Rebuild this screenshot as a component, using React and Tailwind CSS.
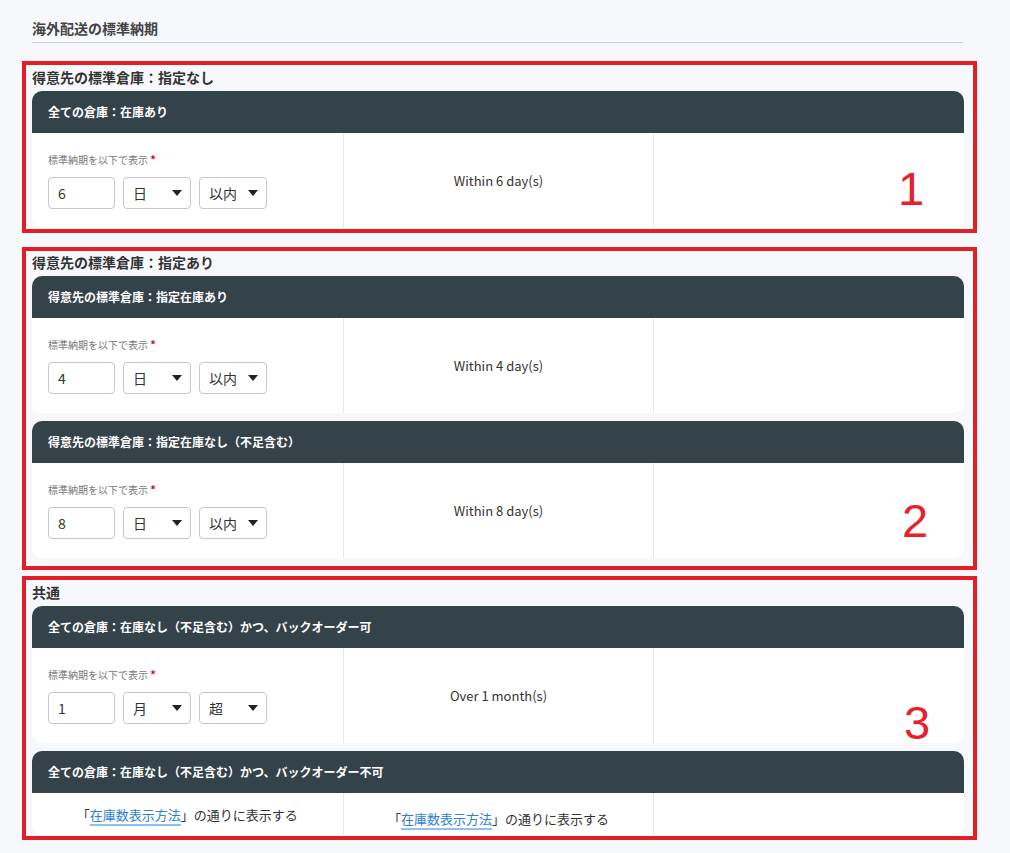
import React from 'react'

const font = { fontFamily: '"Noto Sans CJK JP", "Noto Sans", sans-serif' }

const Arrow = () => (
    <svg width="10" height="6" viewBox="0 0 10 6" className="shrink-0">
        <path d="M0 0h10L5 6z" fill="#222" />
    </svg>
)

const Select = ({ label }) => (
    <div className="w-[68px] h-8 rounded border border-[#c6c6c6] bg-white pl-[9px] pr-[8px] flex items-center justify-between text-[14px] text-[#333]">
        <span>{label}</span>
        <Arrow />
    </div>
)

const LeadTimeField = ({ value, unit, cmp }) => (
    <div className="px-4 pt-[18px]">
        <div className="text-[10px] leading-4 text-[#777]">
            標準納期を以下で表示 <span className="text-[#e60012] font-bold text-[11px]">*</span>
        </div>
        <div className="mt-[9px] flex gap-2">
            <div className="w-[67px] h-8 rounded border border-[#c6c6c6] bg-white pl-[9px] flex items-center text-[14px] text-[#333]">
                {value}
            </div>
            <Select label={unit} />
            <Select label={cmp} />
        </div>
    </div>
)

const Card = ({ title, children, tall = true }) => (
    <div className="rounded-[10px] overflow-hidden bg-white">
        <div className="h-[42px] bg-[#344249] px-4 flex items-center text-white text-[12px] font-bold">
            {title}
        </div>
        <div className={'grid grid-cols-3 ' + (tall ? 'h-[95px]' : 'h-[42px]')}>{children}</div>
    </div>
)

const Preview = ({ text }) => (
    <div className="border-l border-[#e6e8eb] flex items-center justify-center text-[13px] text-[#333]">{text}</div>
)

const Empty = () => <div className="border-l border-[#e6e8eb]" />

const Row = ({ value, unit, cmp, text }) => (
    <>
        <LeadTimeField value={value} unit={unit} cmp={cmp} />
        <Preview text={text} />
        <Empty />
    </>
)

const StockLink = () => (
    <>
        「<span className="text-[#2f7fd8] border-b-2 border-[#8cc0f5]">在庫数表示方法</span>」の通りに表示する
    </>
)

const Mark = ({ n, className }) => (
    <div
        className={'absolute text-[47px] leading-none text-[#e8202a] ' + className}
        style={{ fontFamily: '"Liberation Sans", Arial, sans-serif', fontWeight: 300 }}
    >
        {n}
    </div>
)

const SectionTitle = ({ children }) => (
    <div className="text-[14px] leading-5 font-bold text-[#333] mb-1">{children}</div>
)

const App = () => {
    return (
        <div className="min-h-[853px] bg-[#f7f8fc] pl-[22px] pb-3" style={font}>
            <div className="ml-[10px] w-[931px] pt-[18px] pb-1 border-b border-[#c8ccd2] text-[14px] leading-5 font-bold text-[#444]">
                海外配送の標準納期
            </div>

            <div className="relative mt-[18px] w-[955px] border-4 border-[#e41e26] pl-[6px] pr-[9px] pt-[2px] pb-[1px]">
                <SectionTitle>得意先の標準倉庫：指定なし</SectionTitle>
                <Card title="全ての倉庫：在庫あり">
                    <Row value="6" unit="日" cmp="以内" text="Within 6 day(s)" />
                </Card>
                <Mark n="1" className="left-[872px] top-[100px]" />
            </div>

            <div className="relative mt-[14px] w-[955px] border-4 border-[#e41e26] pl-[6px] pr-[9px] pt-[1px] pb-[8px]">
                <SectionTitle>得意先の標準倉庫：指定あり</SectionTitle>
                <div className="flex flex-col gap-2">
                    <Card title="得意先の標準倉庫：指定在庫あり">
                        <Row value="4" unit="日" cmp="以内" text="Within 4 day(s)" />
                    </Card>
                    <Card title="得意先の標準倉庫：指定在庫なし（不足含む）">
                        <Row value="8" unit="日" cmp="以内" text="Within 8 day(s)" />
                    </Card>
                </div>
                <Mark n="2" className="left-[876px] top-[246px]" />
            </div>

            <div className="relative mt-[6px] w-[955px] border-4 border-[#e41e26] pl-[6px] pr-[9px] pt-[2px] pb-[1px]">
                <SectionTitle>共通</SectionTitle>
                <div className="flex flex-col gap-2">
                    <Card title="全ての倉庫：在庫なし（不足含む）かつ、バックオーダー可">
                        <Row value="1" unit="月" cmp="超" text="Over 1 month(s)" />
                    </Card>
                    <Card title="全ての倉庫：在庫なし（不足含む）かつ、バックオーダー不可" tall={false}>
                        <div className="pt-[12px] text-center text-[13px] leading-5 text-[#333]">
                            <StockLink />
                        </div>
                        <div className="border-l border-[#e6e8eb] pt-[16px] text-center text-[13px] leading-5 text-[#333]">
                            <StockLink />
                        </div>
                        <Empty />
                    </Card>
                </div>
                <Mark n="3" className="left-[878px] top-[119px]" />
            </div>
        </div>
    )
}

export default App
